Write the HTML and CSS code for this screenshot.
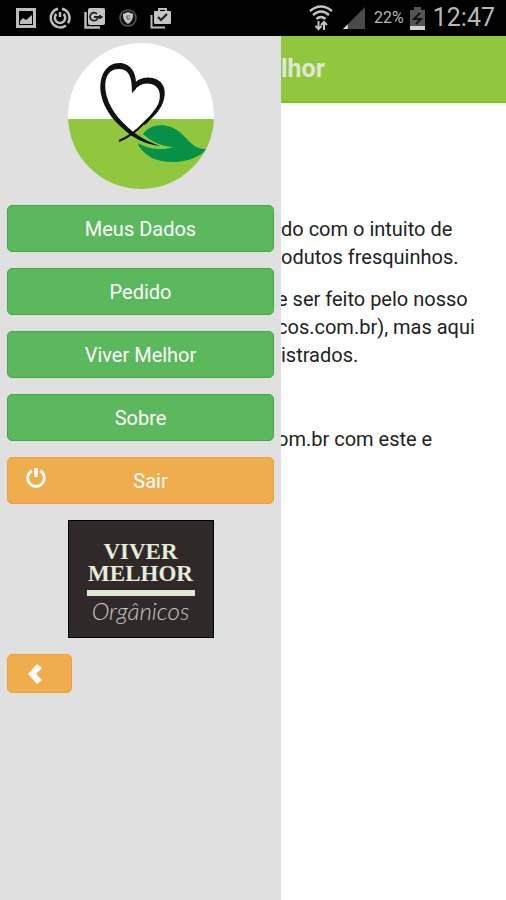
FILE: index.html
```html
<!DOCTYPE html>
<html lang="pt-BR">
<head>
<meta charset="UTF-8">
<meta name="viewport" content="width=device-width, initial-scale=1.0">
<title>Viver Melhor</title>
<link rel="stylesheet" href="styles.css">
</head>
<body>

<div class="status-bar">
    <div class="notifications">
        <svg width="20" height="22" viewBox="0 0 20 22"><path d="M1.5 2.5h17v17h-17z" fill="none" stroke="#bdbdbd" stroke-width="3"/><path d="M4 17v-3l3-3 3 2 6-5v9z" fill="#bdbdbd"/></svg>
        <svg width="22" height="22" viewBox="0 0 22 22" fill="none" stroke="#bdbdbd" stroke-width="2.5"><path d="M9 1.7A9.500 9.500 0 1 0 17 18.500M13 1.700a9.500 9.500 0 0 1 6 14.500"/><path d="M7.500 7a5.200 5.200 0 1 0 7 0M11 5v5"/></svg>
        <svg width="22" height="22" viewBox="0 0 22 22"><path d="M1.500 5v15.500H16" fill="none" stroke="#bdbdbd" stroke-width="2.500"/><rect x="4" y="1" width="17" height="17" rx="2" fill="#c4c4c4"/><path d="M13 7a4 4 0 1 0 1 3h-4M16 8v4M14.500 10h4" fill="none" stroke="#222" stroke-width="1.800"/></svg>
        <svg width="18" height="22" viewBox="0 0 18 22"><circle cx="9" cy="11" r="8" fill="#111" stroke="#555" stroke-width="1.500"/><path d="M9 5l5 2c0 5-1 7-5 10-4-3-5-5-5-10z" fill="#c4c4c4"/><path d="M11 9H8v3h3v-1" fill="none" stroke="#555"/></svg>
        <svg width="22" height="22" viewBox="0 0 22 22"><path d="M1.500 8v12.500H15M9 4V2h7v2" fill="none" stroke="#bdbdbd" stroke-width="2"/><rect x="4" y="4" width="17" height="13" rx="1" fill="#c4c4c4"/><path d="M8 10l3 3 6-6" fill="none" stroke="#222" stroke-width="2.200"/></svg>
    </div>
    <div class="system">
        <svg width="24" height="26" viewBox="0 0 24 26" fill="none" stroke="#c4c4c4" stroke-width="2.400"><path d="M1 6q11-9 22 0M4 10q8-7 16 0M7.500 14q4.500-4 9 0"/><path d="M9.500 16v9M6.500 21l3 3 3-3M15 25v-9M12 20l3-3 3 3" stroke-width="2"/></svg>
        <svg class="signal" width="23" height="23" viewBox="0 0 24 24"><path d="M23 0v23H0z" fill="#4a4a4a"/><path d="M5 18v5H0z" fill="#e0e0e0"/></svg>
        <span class="percent">22%</span>
        <svg width="15" height="23" viewBox="0 0 15 23"><path d="M4 0h7v3h4v20H0V3h4z" fill="#555"/><path d="M0 19h15v4H0z" fill="#d0d0d0"/><path d="M10 6l-6 6h7l-5 5" fill="none" stroke="#111" stroke-width="2"/></svg>
        <span class="clock">12:47</span>
    </div>
</div>

<div class="screen">
    <nav class="menu">
        <svg class="logo" width="146" height="146" viewBox="0 0 146 146" role="img" aria-label="Viver Melhor">
            <defs><clipPath id="circle"><circle cx="73" cy="73" r="73"/></clipPath></defs>
            <g clip-path="url(#circle)">
                <path d="M0 0h146v77H0z" fill="#fff"/>
                <path d="M0 76h146v70H0z" fill="#90c73e"/>
                <path d="M37 62Q48 78 64 90Q77 80 88 66L84 48H42z" fill="#fff"/>
                <path d="M75 91C81 83 91 80 103 84C119 90 122 107 138 106L135 110C119 121 98 121 84 115C75 110 70 103 70 100C79 106 95 108 105 104C96 104 83 99 75 91Z" fill="#059149"/>
                <path d="M51 98Q65 92 75 81C87 70 95 60 95 50" fill="none" stroke="#111" stroke-width="2"/>
                <path d="M64 50C69 42 77 39 83 41C92 43 93 52 91 59C88 67 82 73 75 81L77 82C86 73 94 66 96 56C99 44 93 37 85 35C77 33 69 36 65 42Z" fill="#111"/>
                <path d="M64 50C64 38 63 26 51 26C38 26 35 39 39 54C43 69 56 82 68 91Q78 98 92 103Q76 101 64 93C48 81 36 68 33 51C30 32 39 19 53 20C66 22 69 34 68 46Z" fill="#111"/>
            </g>
        </svg>

        <button class="btn btn-success">Meus Dados</button>
        <button class="btn btn-success">Pedido</button>
        <button class="btn btn-success">Viver Melhor</button>
        <button class="btn btn-success">Sobre</button>
        <button class="btn btn-warning btn-exit">
            <svg width="20" height="20" viewBox="0 0 20 20" fill="none" stroke="#fff" stroke-width="2.800"><path d="M6 2.800a8.300 8.300 0 1 0 8 0"/><path d="M10 0v9" stroke-width="3.500"/></svg>
            <span>Sair</span>
        </button>

        <div class="brand">
            <span class="brand-name">VIVER</span>
            <span class="brand-name">MELHOR</span>
            <hr>
            <span class="brand-script">Orgânicos</span>
        </div>

        <button class="btn btn-warning btn-back" aria-label="Voltar">
            <svg width="14" height="20" viewBox="0 0 14 20"><path d="M0 10L9 0l5 4-6 6 6 6-5 4z" fill="#fff"/></svg>
        </button>
    </nav>

    <main class="page">
        <header>
            <h1>lhor</h1>
        </header>
        <div class="content">
            <p>do com o intuito de<br>odutos fresquinhos.</p>
            <p><span class="cut">e ser feito pelo nosso</span><br><span class="cut">cos.com.br), mas aqui</span><br>istrados.</p>
            <p>&nbsp;</p>
            <p><span class="cut">om.br com este e</span></p>
        </div>
    </main>
</div>

</body>
</html>
```
FILE: styles.css
```css
* {
    box-sizing: border-box;
}
body {
    font-family: Roboto, sans-serif;
    font-size: 20px;
    line-height: 28px;
    margin: 0;
    min-height: 100vh;
    display: flex;
    flex-direction: column;
    background-color: #fff;
    color: #222;
}
svg {
    display: block;
    flex: none;
}
.status-bar {
    height: 36px;
    padding: 0 11px 0 16px;
    display: flex;
    align-items: center;
    justify-content: space-between;
    background-color: #000;
    color: #b8b8b8;
}
.notifications {
    display: flex;
    align-items: center;
    gap: 13px;
}
.system {
    display: flex;
    align-items: center;
    gap: 6px;
}
.signal {
    margin: 0 2px 0 4px;
}
.percent {
    font-size: 16px;
}
.clock {
    font-size: 25px;
    margin-left: 2px;
}
.screen {
    flex: 1;
    display: flex;
}
.menu {
    flex: 0 0 281px;
    padding: 7px 7px 16px;
    display: flex;
    flex-direction: column;
    gap: 16px;
    background-color: #e0e0e0;
}
.logo {
    align-self: center;
}
.btn {
    height: 47px;
    padding: 0 18px;
    border: 1px solid;
    border-radius: 5px;
    font-family: inherit;
    font-size: 20px;
    color: #fff;
    cursor: pointer;
}
.btn-success {
    background-color: #5cb85c;
    border-color: #43a843;
}
.btn-warning {
    background-color: #f0ad4e;
    border-color: #eea236;
}
.btn-exit {
    display: flex;
    align-items: center;
}
.btn-exit svg {
    margin-bottom: 6px;
}
.btn-exit span {
    flex: 1;
}
.btn-back {
    width: 65px;
    height: 39px;
    display: flex;
    align-items: center;
    padding: 0 20px;
}
.brand {
    align-self: center;
    width: 146px;
    height: 118px;
    padding: 20px 16px 0;
    display: flex;
    flex-direction: column;
    align-items: center;
    border: 1px solid #000;
    background-color: #30292a;
    color: #e4ecda;
}
.brand-name {
    font-family: "Liberation Serif", serif;
    font-size: 23px;
    font-weight: bold;
    line-height: 22px;
}
.brand hr {
    width: 108px;
    height: 6px;
    margin: 5px 0 2px;
    border: none;
    background-color: #dcebd0;
}
.brand-script {
    font-family: Lato, sans-serif;
    font-size: 24px;
    font-style: italic;
    font-weight: 300;
    line-height: 26px;
    color: #c8c5c0;
}
.page {
    flex: 1;
    min-width: 0;
    overflow: hidden;
}
header {
    height: 67px;
    display: flex;
    align-items: center;
    background-color: #90c73e;
    border-bottom: 2px solid #80bf22;
}
h1 {
    margin: 0;
    font-size: 25px;
    color: #e0e6d8;
}
.content {
    padding-top: 112px;
    white-space: nowrap;
}
.content p {
    margin: 0 0 14px;
}
/* lines that run under the open menu */
.cut {
    margin-left: -4px;
}
```
